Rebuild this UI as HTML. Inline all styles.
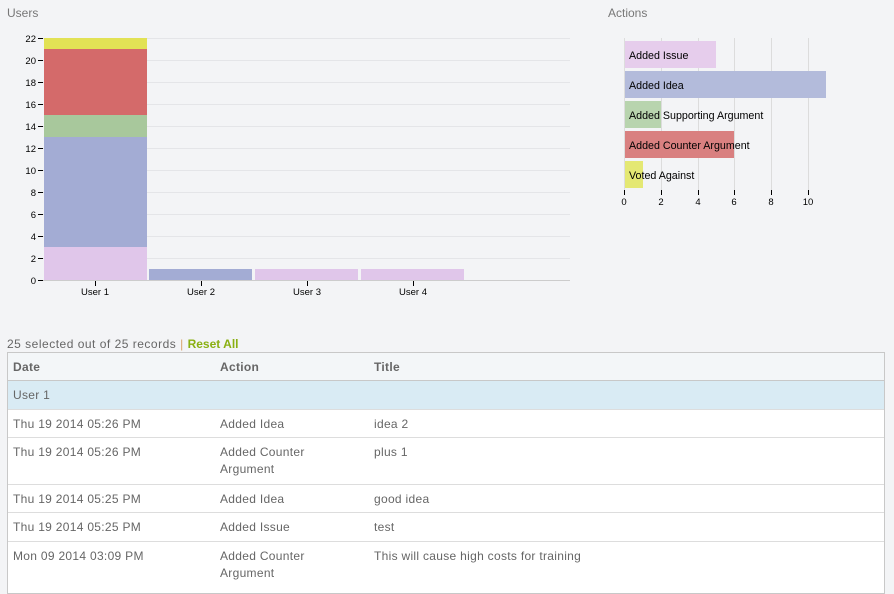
<!DOCTYPE html>
<html><head><style>
body{margin:0;width:894px;height:585px;background:#f3f4f6;overflow:hidden;position:relative;font-family:"Liberation Sans",sans-serif;}
.t{position:absolute;font-size:12px;color:#777;}
.ax{font-family:"Liberation Sans",sans-serif;font-size:9.5px;fill:#000;}
.tbl{position:absolute;left:7px;top:352px;width:876px;height:240px;border:1px solid #c8c8c8;background:#fff;}
.r{position:absolute;left:0;width:876px;border-bottom:1px solid #ddd;font-size:12px;color:#666;letter-spacing:0.3px;}
.r span{position:absolute;top:6px;line-height:17px;}
</style></head><body>
<div class="t" style="left:7px;top:6px;">Users</div>
<div class="t" style="left:608px;top:6px;">Actions</div>
<svg width="894" height="340" style="position:absolute;left:0;top:0">
<g stroke="#e4e5e8" stroke-width="1">
<line x1="43" x2="570" y1="38.5" y2="38.5"/><line x1="43" x2="570" y1="60.5" y2="60.5"/><line x1="43" x2="570" y1="82.5" y2="82.5"/><line x1="43" x2="570" y1="104.5" y2="104.5"/><line x1="43" x2="570" y1="126.5" y2="126.5"/><line x1="43" x2="570" y1="148.5" y2="148.5"/><line x1="43" x2="570" y1="170.5" y2="170.5"/><line x1="43" x2="570" y1="192.5" y2="192.5"/><line x1="43" x2="570" y1="214.5" y2="214.5"/><line x1="43" x2="570" y1="236.5" y2="236.5"/><line x1="43" x2="570" y1="258.5" y2="258.5"/>
</g>
<rect x="44" y="247" width="103" height="33" fill="#e0c6ea"/>
<rect x="44" y="137" width="103" height="110" fill="#a3acd4"/>
<rect x="44" y="115" width="103" height="22" fill="#a8c89c"/>
<rect x="44" y="49" width="103" height="66" fill="#d46a6a"/>
<rect x="44" y="38" width="103" height="11" fill="#e2e255"/>
<rect x="149" y="269" width="103" height="11" fill="#a3acd4"/>
<rect x="255" y="269" width="103" height="11" fill="#e0c6ea"/>
<rect x="361" y="269" width="103" height="11" fill="#e0c6ea"/>
<g stroke="#000" stroke-width="1">
<line x1="43" x2="570" y1="280.5" y2="280.5" stroke="#ccc"/>
<line x1="38" x2="43" y1="38.5" y2="38.5"/><line x1="38" x2="43" y1="60.5" y2="60.5"/><line x1="38" x2="43" y1="82.5" y2="82.5"/><line x1="38" x2="43" y1="104.5" y2="104.5"/><line x1="38" x2="43" y1="126.5" y2="126.5"/><line x1="38" x2="43" y1="148.5" y2="148.5"/><line x1="38" x2="43" y1="170.5" y2="170.5"/><line x1="38" x2="43" y1="192.5" y2="192.5"/><line x1="38" x2="43" y1="214.5" y2="214.5"/><line x1="38" x2="43" y1="236.5" y2="236.5"/><line x1="38" x2="43" y1="258.5" y2="258.5"/><line x1="38" x2="43" y1="280.5" y2="280.5"/>
<line x1="95.5" x2="95.5" y1="281" y2="286"/><line x1="201.5" x2="201.5" y1="281" y2="286"/><line x1="307.5" x2="307.5" y1="281" y2="286"/><line x1="413.5" x2="413.5" y1="281" y2="286"/>
</g>
<g class="ax" text-anchor="end">
<text x="36" y="42">22</text><text x="36" y="64">20</text><text x="36" y="86">18</text><text x="36" y="108">16</text><text x="36" y="130">14</text><text x="36" y="152">12</text><text x="36" y="174">10</text><text x="36" y="196">8</text><text x="36" y="218">6</text><text x="36" y="240">4</text><text x="36" y="262">2</text><text x="36" y="284">0</text>
</g>
<g class="ax" text-anchor="middle">
<text x="95" y="295">User 1</text><text x="201" y="295">User 2</text><text x="307" y="295">User 3</text><text x="413" y="295">User 4</text>
</g>
<g stroke="#dcdcdc"><line x1="661.5" x2="661.5" y1="38" y2="190"/><line x1="698.5" x2="698.5" y1="38" y2="190"/><line x1="734.5" x2="734.5" y1="38" y2="190"/><line x1="771.5" x2="771.5" y1="38" y2="190"/><line x1="808.5" x2="808.5" y1="38" y2="190"/></g>
<rect x="625" y="41" width="91" height="27" fill="#e6cdec"/>
<rect x="625" y="71" width="201" height="27" fill="#b3bbdb"/>
<rect x="625" y="101" width="36" height="27" fill="#b8d4ae"/>
<rect x="625" y="131" width="109" height="27" fill="#d98080"/>
<rect x="625" y="161" width="18" height="27" fill="#e4e873"/>
<line x1="624.5" x2="624.5" y1="38" y2="190" stroke="#ddd"/>
<g style="font-family:'Liberation Sans',sans-serif;font-size:10.7px" fill="#000">
<text x="629" y="59">Added Issue</text><text x="629" y="89">Added Idea</text><text x="629" y="119">Added Supporting Argument</text><text x="629" y="149">Added Counter Argument</text><text x="629" y="179">Voted Against</text>
</g>
<g stroke="#000"><line x1="624.5" x2="624.5" y1="190" y2="195"/><line x1="661.5" x2="661.5" y1="190" y2="195"/><line x1="698.5" x2="698.5" y1="190" y2="195"/><line x1="734.5" x2="734.5" y1="190" y2="195"/><line x1="771.5" x2="771.5" y1="190" y2="195"/><line x1="808.5" x2="808.5" y1="190" y2="195"/></g>
<g class="ax" text-anchor="middle"><text x="624" y="205">0</text><text x="661" y="205">2</text><text x="698" y="205">4</text><text x="734" y="205">6</text><text x="771" y="205">8</text><text x="808" y="205">10</text></g>
</svg>
<div class="t" style="left:7px;top:337px;color:#666;letter-spacing:0.5px;">25 selected out of 25 records <span style="color:#d9a46a">|</span> <b style="color:#8ab012;letter-spacing:0">Reset All</b></div>
<div class="tbl">
<div class="r" style="top:0;height:27px;background:#f3f6f8;border-bottom:1px solid #c8c8c8;font-weight:bold;"><span style="left:5px;">Date</span><span style="left:212px;">Action</span><span style="left:366px;">Title</span></div>
<div class="r" style="top:28px;height:28px;background:#d9ebf4;"><span style="left:5px;">User 1</span></div>
<div class="r" style="top:57px;height:27px;"><span style="left:5px;">Thu 19 2014 05:26 PM</span><span style="left:212px;">Added Idea</span><span style="left:366px;">idea 2</span></div>
<div class="r" style="top:85px;height:46px;"><span style="left:5px;">Thu 19 2014 05:26 PM</span><span style="left:212px;">Added Counter<br>Argument</span><span style="left:366px;">plus 1</span></div>
<div class="r" style="top:132px;height:27px;"><span style="left:5px;">Thu 19 2014 05:25 PM</span><span style="left:212px;">Added Idea</span><span style="left:366px;">good idea</span></div>
<div class="r" style="top:160px;height:28px;"><span style="left:5px;">Thu 19 2014 05:25 PM</span><span style="left:212px;">Added Issue</span><span style="left:366px;">test</span></div>
<div class="r" style="top:189px;height:50px;border:none;"><span style="left:5px;">Mon 09 2014 03:09 PM</span><span style="left:212px;">Added Counter<br>Argument</span><span style="left:366px;">This will cause high costs for training</span></div>
</div>
</body></html>
